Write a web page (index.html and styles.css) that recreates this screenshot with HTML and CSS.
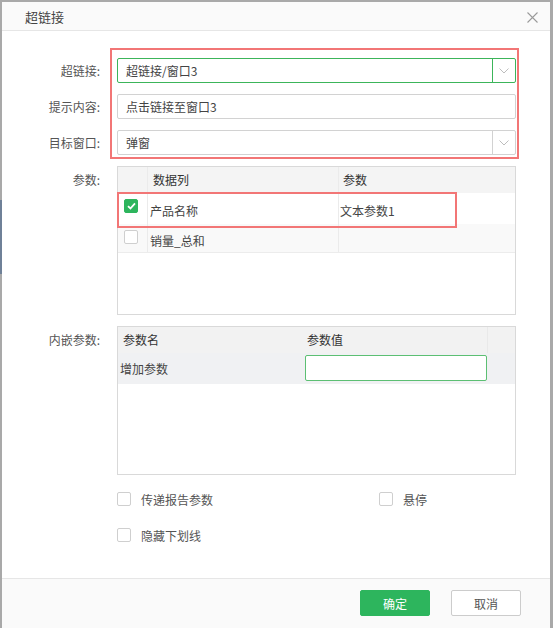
FILE: index.html
```html
<!DOCTYPE html>
<html lang="zh-CN">
<head>
<meta charset="utf-8">
<title>超链接</title>
<link rel="stylesheet" href="styles.css">
</head>
<body>
<div class="dialog">
  <div class="dlg-header">
    <span class="dlg-title">超链接</span>
    <span class="dlg-close">
      <svg width="11" height="11" viewBox="0 0 11 11"><path d="M0.5 0.5L10.5 10.5M10.5 0.5L0.5 10.5" stroke="#9a9a9a" stroke-width="1.1" fill="none"/></svg>
    </span>
  </div>
  <div class="dlg-body">
    <div class="top-form">
      <div class="labels">
        <div class="lbl">超链接:</div>
        <div class="lbl">提示内容:</div>
        <div class="lbl">目标窗口:</div>
      </div>
      <div class="fields">
        <div class="select active">
          <span class="sel-val">超链接/窗口3</span>
          <span class="sel-arrow"><svg width="10" height="6" viewBox="0 0 10 6"><path d="M0.5 0.5L5 5L9.5 0.5" stroke="#bdbdbd" stroke-width="1" fill="none"/></svg></span>
        </div>
        <div class="text-input">点击链接至窗口3</div>
        <div class="select">
          <span class="sel-val">弹窗</span>
          <span class="sel-arrow"><svg width="10" height="6" viewBox="0 0 10 6"><path d="M0.5 0.5L5 5L9.5 0.5" stroke="#bdbdbd" stroke-width="1" fill="none"/></svg></span>
        </div>
      </div>
    </div>

    <div class="form-row params-row">
      <div class="lbl tbl-lbl">参数:</div>
      <div class="table params-table">
        <div class="tr th">
          <div class="td c-check"></div>
          <div class="td c-col">数据列</div>
          <div class="td c-param">参数</div>
        </div>
        <div class="tr row1 marked">
          <div class="td c-check"><span class="cb checked"><svg width="9" height="8" viewBox="0 0 9 8"><path d="M1 4.2L3.4 6.5L8 1.3" stroke="#fff" stroke-width="1.8" fill="none"/></svg></span></div>
          <div class="td c-col">产品名称</div>
          <div class="td c-param">文本参数1</div>
        </div>
        <div class="tr row2">
          <div class="td c-check"><span class="cb"></span></div>
          <div class="td c-col">销量_总和</div>
          <div class="td c-param"></div>
        </div>
      </div>
    </div>

    <div class="form-row embed-row">
      <div class="lbl tbl-lbl">内嵌参数:</div>
      <div class="table embed-table">
        <div class="tr th">
          <div class="td e-name">参数名</div>
          <div class="td e-val">参数值</div>
          <div class="td e-gutter"></div>
        </div>
        <div class="tr add-row">
          <div class="td e-name">增加参数</div>
          <div class="td e-val"><span class="val-input"></span></div>
          <div class="td e-gutter"></div>
        </div>
      </div>
    </div>

    <div class="options">
      <label class="opt"><span class="cb"></span><span>传递报告参数</span></label>
      <label class="opt"><span class="cb"></span><span>悬停</span></label>
      <label class="opt"><span class="cb"></span><span>隐藏下划线</span></label>
    </div>
  </div>
  <div class="dlg-footer">
    <button class="btn btn-primary">确定</button>
    <button class="btn btn-default">取消</button>
  </div>
</div>
</body>
</html>
```

FILE: styles.css
```css
* { box-sizing: border-box; }

html, body { height: 100%; }

body {
  margin: 0;
  padding: 2px 3px 0 2px;
  font-family: "Noto Sans CJK SC", "Microsoft YaHei", sans-serif;
  font-size: 12px;
  color: #333;
  background-color: #a9a9a9;
  background-image: linear-gradient(to bottom, #a9a9a9 0, #a9a9a9 200px, #6f8198 200px, #6f8198 274px, #a9a9a9 274px);
  background-repeat: no-repeat;
  background-size: 2px 100%;
  overflow: hidden;
}

.dialog {
  height: 626px;
  background: #fff;
  display: flex;
  flex-direction: column;
}

.dlg-header {
  height: 29px;
  background: #fafafa;
  border-bottom: 1px solid #e6e6e6;
  display: flex;
  align-items: center;
  justify-content: space-between;
  padding: 0 12px 0 23px;
}

.dlg-title {
  font-size: 13px;
  color: #444;
  line-height: 16px;
  margin-top: 2px;
}

.dlg-close {
  display: flex;
  margin-top: 2px;
}

.dlg-body {
  flex: 1;
  padding-top: 27px;
}

.top-form {
  display: flex;
}

.labels, .fields {
  display: flex;
  flex-direction: column;
  gap: 11px;
}

.lbl {
  width: 98px;
  text-align: right;
  line-height: 25px;
  height: 25px;
  color: #555;
  margin-right: 17px;
}

.fields {
  width: 399px;
  position: relative;
}

.fields::after {
  content: "";
  position: absolute;
  top: -10px;
  left: -7px;
  right: -3px;
  bottom: -4px;
  border: 2px solid #f27676;
  pointer-events: none;
}

.select, .text-input {
  height: 25px;
  border: 1px solid #d2d2d2;
  border-radius: 2px;
  display: flex;
  align-items: center;
  background: #fff;
}

.text-input {
  padding-left: 8px;
  color: #444;
}

.select .sel-val {
  flex: 1;
  padding-left: 8px;
  color: #444;
}

.select .sel-arrow {
  width: 23px;
  height: 100%;
  border-left: 1px solid #d2d2d2;
  display: flex;
  align-items: center;
  justify-content: center;
}

.select.active,
.select.active .sel-arrow {
  border-color: #3cb55a;
}

.form-row {
  display: flex;
  margin-top: 11px;
}

.tbl-lbl {
  line-height: 27px;
  height: 27px;
}

.table {
  width: 399px;
  height: 149px;
  border: 1px solid #d9d9d9;
  display: flex;
  flex-direction: column;
}

.tr {
  display: flex;
  position: relative;
}

.th {
  height: 26px;
  background: #f4f4f4;
  color: #333;
}

.th .td {
  line-height: 26px;
}

.params-table .c-check { width: 29px; padding-left: 6px; }
.params-table .c-col { width: 191px; border-left: 1px solid #ebebeb; }
.params-table .c-param { flex: 1; border-left: 1px solid #ebebeb; }

.params-table .th .c-col { padding-left: 5px; }
.params-table .th .c-param { padding-left: 4px; }

.params-table .row1 { height: 31px; background: #fff; }
.params-table .row2 { height: 29px; background: #f9f9f9; border-bottom: 1px solid #ececec; }

.params-table .row1 .td { padding-top: 10px; line-height: 16px; color: #444; }
.params-table .row2 .td { padding-top: 9px; line-height: 16px; color: #444; }
.params-table .row1 .c-check { padding-top: 6px; }
.params-table .row2 .c-check { padding-top: 6px; }
.params-table .c-col { padding-left: 2px; }
.params-table .c-param { padding-left: 1px; }

.marked { z-index: 2; }

.marked::after {
  content: "";
  position: absolute;
  top: -1px;
  left: -1px;
  width: 336px;
  height: 32px;
  border: 2px solid #f27676;
  pointer-events: none;
}

.cb {
  display: flex;
  align-items: center;
  justify-content: center;
  width: 14px;
  height: 14px;
  border: 1px solid #cfcfcf;
  border-radius: 2px;
  background: #fff;
  flex: none;
}

.cb.checked {
  background: #2db55d;
  border-color: #2db55d;
}

.embed-table .e-name { width: 185px; padding-left: 5px; }
.embed-table .e-val { width: 184px; padding-left: 4px; }
.embed-table .e-gutter { flex: 1; }
.embed-table .th .e-gutter { border-left: 1px solid #e9e9e9; }
.embed-table .th { background: #f2f2f2; }

.add-row {
  height: 31px;
  background: #f0f1f3;
  color: #444;
}

.add-row .e-name {
  padding-left: 2px;
  line-height: 31px;
}

.add-row .e-val {
  padding: 2px 0 0 2px;
}

.val-input {
  display: block;
  width: 182px;
  height: 26px;
  border: 1px solid #5cbf73;
  border-radius: 2px;
  background: #fff;
}

.options {
  display: grid;
  grid-template-columns: 262px auto;
  row-gap: 16px;
  padding-left: 115px;
  margin-top: 14px;
}

.opt {
  display: flex;
  align-items: center;
  height: 20px;
  color: #555;
  gap: 10px;
}

.dlg-footer {
  height: 50px;
  border-top: 1px solid #e6e6e6;
  background: #fafafa;
  display: flex;
  justify-content: flex-end;
  align-items: flex-start;
  gap: 21px;
  padding: 11px 29px 0 0;
}

.btn {
  width: 70px;
  height: 26px;
  border-radius: 2px;
  font-family: inherit;
  font-size: 12px;
  padding: 0;
  cursor: pointer;
}

.btn-primary {
  background: #2db55d;
  border: 1px solid #2db55d;
  color: #fff;
}

.btn-default {
  background: #fff;
  border: 1px solid #cccccc;
  color: #555;
}
```
